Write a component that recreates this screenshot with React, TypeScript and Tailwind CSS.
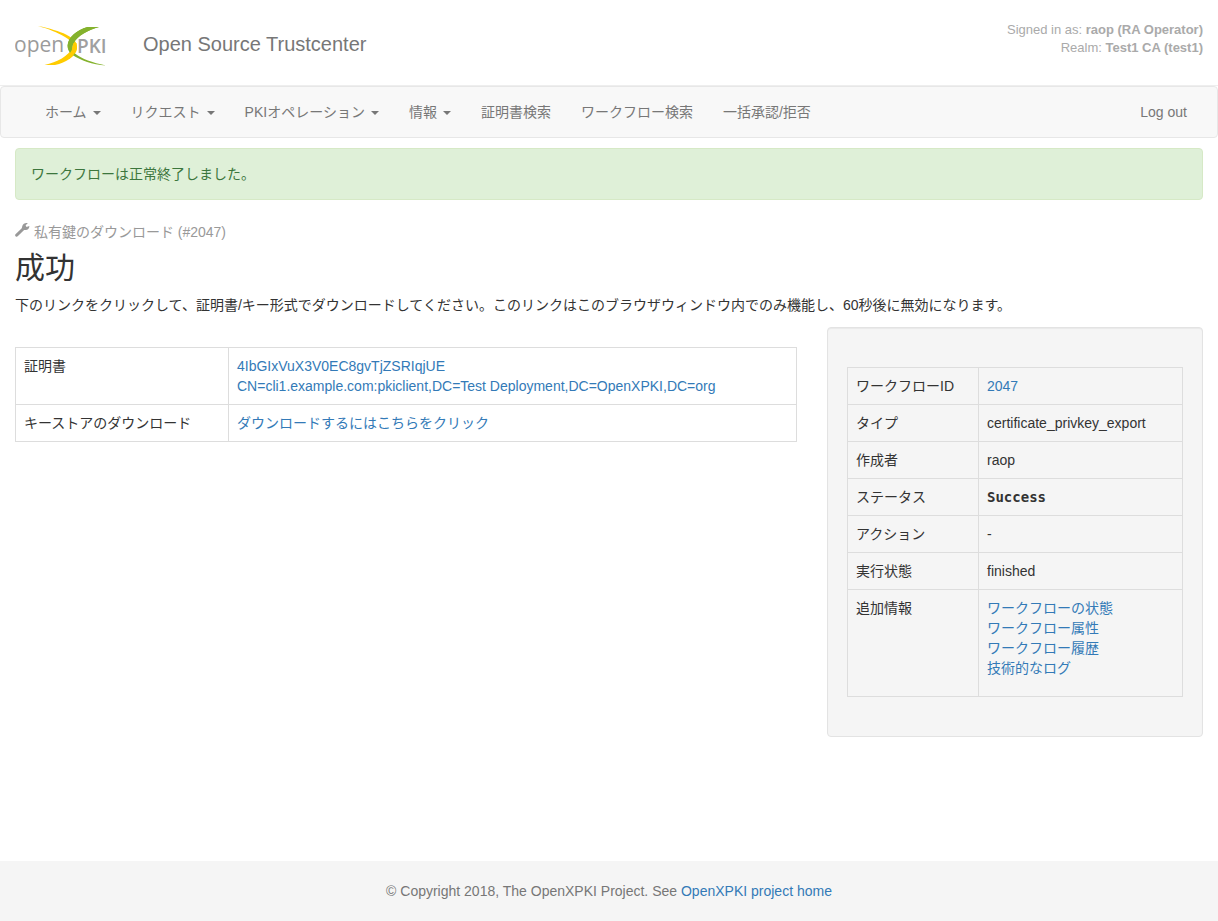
import clsx from "clsx"

type NavItem = {
  label: string;
  menu?: boolean;
}

const navItems: NavItem[] = [
  { label: "ホーム", menu: true },
  { label: "リクエスト", menu: true },
  { label: "PKIオペレーション", menu: true },
  { label: "情報", menu: true },
  { label: "証明書検索" },
  { label: "ワークフロー検索" },
  { label: "一括承認/拒否" },
]

const infoLinks = ["ワークフローの状態", "ワークフロー属性", "ワークフロー履歴", "技術的なログ"]

const Logo: React.FC = () => (
  <svg width="92" height="44" viewBox="0 0 92 44" role="img" aria-label="OpenXPKI">
    <path d="M23 4C34 6 45 9.500 51 12.500C60 17 62.500 21 62 26.500C61 34.500 51 40.500 40 43H29.500C42 40 54 34 57 26C59 20.500 54 17.500 50 15C42 10.500 34 7 23 4Z" fill="#fc0" />
    <path d="M84 5H72.500C62 8 53 15 52.600 23.500C52.500 27.500 54.500 31 57.500 33C66 38.500 77 42.500 91 43.500C77 40.500 67 37 60 31.500C56.500 28.500 56.500 25 58.500 21.500C63 13.500 73 8 84 5Z" fill="#84b22d" />
    <path d="M62 26.500C61 30.500 58 34 54 37L50 35C54 32 57 29 57.500 25L58.500 21L61.500 21Z" fill="#fc0" />
    <text x="-1" y="30" fontFamily="'Open Sans', sans-serif" fontSize="21" fill="#9b9b9b">open</text>
    <path d="M58.500 20.500C63 13.500 73 8 84 5H72.500C62 8 53 15 52.600 23.500C52.500 26 53.500 28.500 55.500 30.500C57.500 27.500 56.500 24 58.500 20.500Z" fill="#84b22d" />
    <text x="62" y="31" fontFamily="'Open Sans', sans-serif" fontSize="19" fontWeight="600" fill="#a0a0a0">PKI</text>
  </svg>
)

const Wrench: React.FC = () => (
  <svg className="inline-block align-baseline" width="15" height="14" viewBox="0 0 15 14" fill="currentColor" aria-hidden="true">
    <path d="M12.800 .3 10.600 2.300 11.500 4.100 14.300 3.100C14.600 5.300 12.800 7.200 10.500 7 9.700 6.900 9.200 6.900 8.600 7.400L2.700 13.300C1.300 14.600-.8 12.700 .5 11.200L6.500 5.500C7.100 4.900 7 4.100 7.300 3 8 .8 10.700-.6 12.800 .3Z" />
  </svg>
)

const Link: React.FC<{ children?: React.ReactNode }> = ({ children }) => (
  <a href="#" className="text-[#337ab7]">{children}</a>
)

type RowProps = {
  label: string;
  labelWidth: string;
  children?: React.ReactNode;
}

const Row: React.FC<RowProps> = ({ label, labelWidth, children }) => (
  <tr>
    <th scope="row" className={clsx("border border-[#ddd] p-2 text-left align-top font-normal", labelWidth)}>{label}</th>
    <td className="border border-[#ddd] p-2 align-top break-words">{children}</td>
  </tr>
)

const Header: React.FC = () => (
  <header className="flex justify-between px-[15px] h-[86px] border-b border-[#eee]">
    <div className="flex items-center gap-9 pt-[3px]">
      <Logo />
      <span className="text-xl text-[#777]">Open Source Trustcenter</span>
    </div>
    <div className="pt-[21px] text-right text-[13px] leading-[18px] text-[#aaa]">
      <p>Signed in as: <b>raop (RA Operator)</b></p>
      <p>Realm: <b>Test1 CA (test1)</b></p>
    </div>
  </header>
)

const Navbar: React.FC = () => (
  <nav className="flex justify-between rounded border border-[#e7e7e7] bg-[#f8f8f8] pl-[29px] pr-[15px] text-[#777]">
    <ul className="flex">
      {navItems.map(({ label, menu }) => (
        <li key={label}>
          {menu ? (
            <button type="button" className="flex items-center gap-1.5 px-[15px] py-[15px]">
              {label}
              <span className="mt-0.5 border-x-4 border-t-4 border-x-transparent border-t-current" />
            </button>
          ) : (
            <a href="#" className="block px-[15px] py-[15px]">{label}</a>
          )}
        </li>
      ))}
    </ul>
    <a href="#" className="px-[15px] py-[15px]">Log out</a>
  </nav>
)

const App: React.FC = () => {
  return (
    <div className="flex min-h-screen flex-col bg-white font-['Liberation_Sans','Noto_Sans_CJK_JP',sans-serif] text-sm leading-5 text-[#333]" lang="ja">
      <Header />
      <Navbar />
      <main className="px-[15px] pt-2.5 pb-8">
        <div role="status" className="rounded border border-[#d6e9c6] bg-[#dff0d8] p-[15px] text-[#3c763d]">
          ワークフローは正常終了しました。
        </div>
        <div className="mt-[22px] text-[#999]">
          <Wrench /> 私有鍵のダウンロード (#2047)
        </div>
        <h1 className="mt-2.5 text-3xl leading-8">成功</h1>
        <p className="mt-[11px]">
          下のリンクをクリックして、証明書/キー形式でダウンロードしてください。このリンクはこのブラウザウィンドウ内でのみ機能し、60秒後に無効になります。
        </p>
        <div className="mt-3 grid grid-cols-3 gap-[30px]">
          <section className="col-span-2 pt-5">
            <table className="w-full table-fixed border-collapse">
              <tbody>
                <Row label="証明書" labelWidth="w-[213px]">
                  <Link>4IbGIxVuX3V0EC8gvTjZSRIqjUE<br />CN=cli1.example.com:pkiclient,DC=Test Deployment,DC=OpenXPKI,DC=org</Link>
                </Row>
                <Row label="キーストアのダウンロード" labelWidth="w-[213px]">
                  <Link>ダウンロードするにはこちらをクリック</Link>
                </Row>
              </tbody>
            </table>
          </section>
          <aside className="rounded border border-[#e3e3e3] bg-[#f5f5f5] px-[19px] py-[39px] shadow-[inset_0_1px_1px_rgba(0,0,0,0.05)]">
            <table className="w-full table-fixed border-collapse">
              <tbody>
                <Row label="ワークフローID" labelWidth="w-[131px]"><Link>2047</Link></Row>
                <Row label="タイプ" labelWidth="w-[131px]">certificate_privkey_export</Row>
                <Row label="作成者" labelWidth="w-[131px]">raop</Row>
                <Row label="ステータス" labelWidth="w-[131px]">
                  <b className="block font-['DejaVu_Sans_Mono',monospace]">Success</b>
                </Row>
                <Row label="アクション" labelWidth="w-[131px]">-</Row>
                <Row label="実行状態" labelWidth="w-[131px]">finished</Row>
                <Row label="追加情報" labelWidth="w-[131px]">
                  <ul className="mb-2.5">
                    {infoLinks.map((text) => <li key={text}><Link>{text}</Link></li>)}
                  </ul>
                </Row>
              </tbody>
            </table>
          </aside>
        </div>
      </main>
      <footer className="mt-auto bg-[#f5f5f5] py-5 text-center text-[#777]">
        © Copyright 2018, The OpenXPKI Project. See <Link>OpenXPKI project home</Link>
      </footer>
    </div>
  )
}

export default App
